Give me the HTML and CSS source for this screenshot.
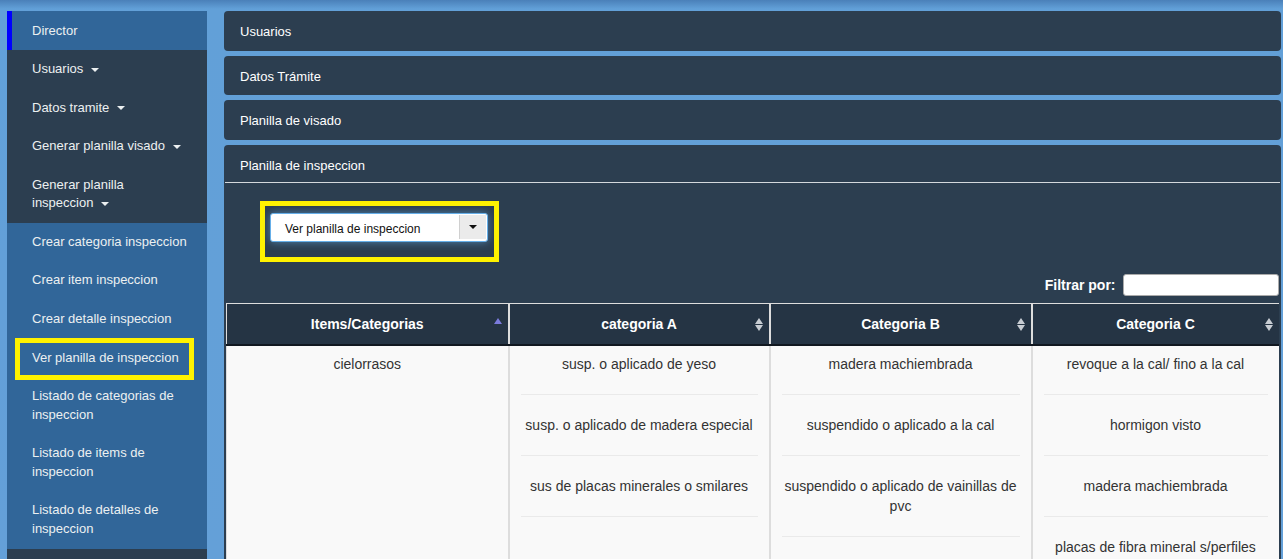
FILE: index.html
```html
<!DOCTYPE html>
<html lang="es">
<head>
<meta charset="utf-8">
<title>Planilla de inspeccion</title>
<link rel="stylesheet" href="styles.css">
</head>
<body>
<div class="layout">
  <nav class="sidebar">
    <ul class="menu">
      <li class="item item-blue item-active">Director</li>
      <li class="item item-dark">Usuarios <span class="caret"></span></li>
      <li class="item item-dark">Datos tramite <span class="caret"></span></li>
      <li class="item item-dark">Generar planilla visado <span class="caret"></span></li>
      <li class="item item-dark">Generar planilla inspeccion <span class="caret"></span></li>
      <li class="item item-blue">Crear categoria inspeccion</li>
      <li class="item item-blue">Crear item inspeccion</li>
      <li class="item item-blue">Crear detalle inspeccion</li>
      <li class="item item-blue item-mark">Ver planilla de inspeccion<span class="mark"></span></li>
      <li class="item item-blue">Listado de categorias de inspeccion</li>
      <li class="item item-blue">Listado de items de inspeccion</li>
      <li class="item item-blue">Listado de detalles de inspeccion</li>
      <li class="item item-dark item-fill"></li>
    </ul>
  </nav>
  <main class="main">
    <section class="panel"><div class="panel-heading">Usuarios</div></section>
    <section class="panel"><div class="panel-heading">Datos Trámite</div></section>
    <section class="panel"><div class="panel-heading">Planilla de visado</div></section>
    <section class="panel panel-open">
      <div class="panel-heading heading-open">Planilla de inspeccion</div>
      <div class="panel-body">
        <div class="select-wrap">
          <div class="select">
            <span class="select-text">Ver planilla de inspeccion</span>
            <span class="select-btn"><span class="caret-dark"></span></span>
          </div>
        </div>
        <div class="filter-row">
          <label class="filter-label">Filtrar por:</label>
          <span class="filter-input"></span>
        </div>
        <table class="grid">
          <colgroup>
            <col class="c1"><col class="c2"><col class="c3"><col class="c4">
          </colgroup>
          <thead>
            <tr>
              <th>Items/Categorias<span class="sort-asc"></span></th>
              <th>categoria A<span class="sort-both"></span></th>
              <th>Categoria B<span class="sort-both"></span></th>
              <th>Categoria C<span class="sort-both"></span></th>
            </tr>
          </thead>
          <tbody>
            <tr>
              <td><p>cielorrasos</p></td>
              <td>
                <p>susp. o aplicado de yeso</p><hr>
                <p>susp. o aplicado de madera especial</p><hr>
                <p>sus de placas minerales o smilares</p><hr>
              </td>
              <td>
                <p>madera machiembrada</p><hr>
                <p>suspendido o aplicado a la cal</p><hr>
                <p>suspendido o aplicado de vainillas de pvc</p><hr>
              </td>
              <td>
                <p>revoque a la cal/ fino a la cal</p><hr>
                <p>hormigon visto</p><hr>
                <p>madera machiembrada</p><hr>
                <p>placas de fibra mineral s/perfiles</p><hr>
              </td>
            </tr>
          </tbody>
        </table>
      </div>
    </section>
  </main>
</div>
</body>
</html>
```
FILE: styles.css
```css
html, body {
  margin: 0;
  padding: 0;
  height: 100%;
  overflow: hidden;
}
body {
  font-family: "Liberation Sans", Arial, sans-serif;
  background: linear-gradient(#4a80b9 0px, #62a0d8 9px, #64a0d8 100%);
}
.layout {
  display: flex;
  align-items: flex-start;
  padding: 11px 3px 0 7px;
  gap: 17px;
  height: 100%;
  box-sizing: border-box;
}
.sidebar {
  width: 200px;
  flex: none;
  height: 100%;
}
.menu {
  list-style: none;
  margin: 0;
  padding: 0;
  height: 100%;
  display: flex;
  flex-direction: column;
}
.item {
  font-size: 13px;
  line-height: 18.57px;
  padding: 10px 20px 10px 25px;
  color: #ecf0f1;
}
.item-blue { background: #316699; }
.item-dark { background: #2c3e50; }
.item-active {
  border-left: 5px solid #0000ff;
  padding-left: 20px;
  padding-top: 10.5px;
  padding-bottom: 10px;
}
.item-fill { flex: 1; }
.item-mark { position: relative; }
.mark {
  position: absolute;
  left: 8px;
  top: -1px;
  width: 169px;
  height: 32px;
  border: 5px solid #fff200;
}
.caret {
  display: inline-block;
  width: 0;
  height: 0;
  margin-left: 4px;
  vertical-align: middle;
  border-top: 4px solid #ecf0f1;
  border-left: 4px solid transparent;
  border-right: 4px solid transparent;
}
.main {
  flex: 1;
  display: flex;
  flex-direction: column;
  gap: 5px;
  height: 100%;
}
.panel {
  background: #2c3e50;
  border-radius: 4px;
}
.panel-heading {
  color: #ffffff;
  font-size: 13px;
  line-height: 19.5px;
  padding: 11px 16px 9px;
}
.panel-open {
  flex: 1;
  border-radius: 4px 4px 0 0;
}
.heading-open {
  padding: 11px 16px 7px;
  border-bottom: 1px solid #d4d8dc;
  margin: 0 1px;
  padding-left: 15px;
}
.panel-body {
  padding: 18px 2px 0;
}
.select-wrap {
  width: 218px;
  margin-left: 34px;
  border: 5px solid #fff200;
  padding: 7px 6px 15px 5px;
  box-sizing: content-box;
}
.select {
  display: flex;
  height: 29px;
  width: 218px;
  box-sizing: border-box;
  background: #fff;
  border: 1px solid #66afe9;
  border-radius: 3px;
  box-shadow: 0 0 8px rgba(102, 175, 233, 0.6);
}
.select-text {
  flex: 1;
  font-size: 12px;
  line-height: 27px;
  color: #111;
  padding: 2px 0 0 14px;
}
.select-btn {
  width: 26px;
  margin: 1px 1px 2px 0;
  background: #ebebeb;
  border-left: 1px solid #d0d0d0;
  display: flex;
  align-items: center;
  justify-content: center;
}
.caret-dark {
  width: 0;
  height: 0;
  border-top: 4px solid #111;
  border-left: 4px solid transparent;
  border-right: 4px solid transparent;
}
.filter-row {
  display: flex;
  justify-content: flex-end;
  align-items: center;
  gap: 7px;
  margin-top: 12px;
  margin-bottom: 7px;
}
.filter-label {
  color: #fff;
  font-weight: bold;
  font-size: 14px;
}
.filter-input {
  width: 156px;
  height: 22px;
  box-sizing: border-box;
  background: #fff;
  border: 1px solid #aaa;
  border-radius: 3px;
}
.grid {
  width: 100%;
  table-layout: fixed;
  border-collapse: collapse;
  font-size: 14px;
  line-height: 20px;
}
.c1 { width: 282px; }
.c2 { width: 261px; }
.c3 { width: 262px; }
.c4 { width: 247px; }
.grid th {
  position: relative;
  background: #253444;
  color: #fff;
  font-weight: bold;
  padding: 10px 18px 10px;
  border-top: 1px solid #dddddd;
  border-left: 2px solid #dddddd;
  border-bottom: 2px solid #111820;
}
.grid th:first-child { border-left: 1px solid #dddddd; }
.grid td {
  background: #f9f9f9;
  color: #333;
  text-align: center;
  vertical-align: top;
  padding: 8px;
  border-left: 2px solid #dddddd;
  height: 400px;
}
.grid td:first-child { border-left: 1px solid #dddddd; }
.grid p { margin: 0; }
.grid hr {
  border: 0;
  border-top: 1px solid #eaeaea;
  margin: 20px 3px;
}
.sort-asc {
  position: absolute;
  right: 6px;
  top: 14px;
  width: 0;
  height: 0;
  border-bottom: 6px solid #7b7bdc;
  border-left: 4px solid transparent;
  border-right: 4px solid transparent;
}
.sort-both {
  position: absolute;
  right: 6px;
  top: 14px;
  width: 0;
  height: 0;
  border-bottom: 6px solid #c8cdd3;
  border-left: 4px solid transparent;
  border-right: 4px solid transparent;
}
.sort-both::after {
  content: "";
  position: absolute;
  left: -4px;
  top: 7px;
  border-top: 6px solid #c8cdd3;
  border-left: 4px solid transparent;
  border-right: 4px solid transparent;
}
```
